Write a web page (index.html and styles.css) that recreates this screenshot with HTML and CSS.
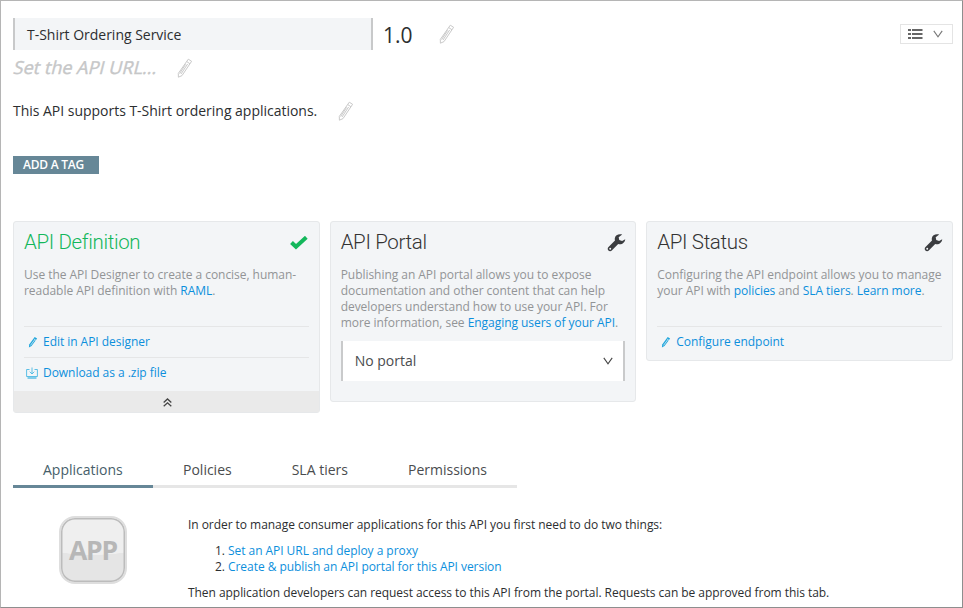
FILE: index.html
```html
<!DOCTYPE html>
<html lang="en">
<head>
<meta charset="utf-8">
<title>T-Shirt Ordering Service</title>
<link rel="stylesheet" href="styles.css">
</head>
<body>
<svg class="defs" width="0" height="0" aria-hidden="true">
  <symbol id="pencil" viewBox="0 0 16 20">
    <g fill="none" stroke="currentColor" stroke-linejoin="round" stroke-width="1">
      <path d="M11.3 1.2 14.6 3.3 5 17.6 1.4 19.2 1.3 15.4Z"/>
      <path d="M9.8 3.6 13 5.8M10.6 6 4 16M8.6 6.4 2.6 15.6"/>
    </g>
  </symbol>
  <symbol id="wrench" viewBox="0 0 20 20">
    <path fill="currentColor" fill-rule="evenodd" d="M16 1.1C12.5-.1 8.700 1.600 8.200 5c-.1.900 0 1.700.2 2.400L1.600 14.200c-1.100 1.100-1.100 2.700-.1 3.700s2.700.9 3.800-.2l6.500-6.600c3.500 1.100 7.200-1.300 7.400-5l-3.300 1.800-3-1-.6-3Zm-12.600 14a1 1 0 1 1 0 2 1 1 0 0 1 0-2Z"/>
  </symbol>
  <symbol id="edit" viewBox="0 0 10 12">
    <path d="M6.700.9 9.100 2.500 3.500 10 .9 11.400 1.200 8.400Z" fill="currentColor"/>
    <path d="M6 3 8 4.400M2.500 9.400 6.500 4" stroke="#f3f5f7" stroke-width=".7"/>
  </symbol>
</svg>
<main class="page">
  <header class="top">
    <div class="name">T-Shirt Ordering Service</div>
    <span class="version">1.0</span>
    <svg class="pencil"><use href="#pencil"/></svg>
    <div class="view">
      <svg width="15" height="12" viewBox="0 0 15 12" fill="#666"><path d="M0 1h3v2H0zM4 1h10.500v2H4zM0 5h3v2H0zM4 5h10.500v2H4zM0 9h3v2H0zM4 9h10.500v2H4z"/></svg>
      <svg width="10" height="8" viewBox="0 0 10 8" fill="none" stroke="#777" stroke-width="1.100"><path d="M.8.900 5 6.800 9.200.9"/></svg>
    </div>
  </header>
  <div class="url"><span class="slanted">Set the API URL...</span><svg class="pencil"><use href="#pencil"/></svg></div>
  <div class="desc"><span>This API supports T-Shirt ordering applications.</span><svg class="pencil"><use href="#pencil"/></svg></div>
  <div class="tag">ADD A TAG</div>

  <section class="cards">
    <article class="card">
      <div class="head done"><h2>API Definition</h2>
        <svg width="18" height="14" viewBox="0 0 18 14"><path d="M1.500 6.500 6 10.800 16.300 1.300" fill="none" stroke="#13b75b" stroke-width="4"/></svg>
      </div>
      <p>Use the API Designer to create a concise, human-<br>readable API definition with <a>RAML</a>.</p>
      <div class="action"><svg class="edit"><use href="#edit"/></svg><a>Edit in API designer</a></div>
      <div class="action"><svg class="down" viewBox="0 0 12 12" fill="none" stroke="#35b1e0"><path d="M3.500 2.500H.6v7h10.800v-7H8.500M6 .5v6M3.700 4.700 6 7l2.300-2.300" stroke-width=".8"/><path d="M1.500 11h9" stroke-width="1.200"/></svg><a>Download as a .zip file</a></div>
      <div class="collapse"><svg width="9" height="9" viewBox="0 0 9 9" fill="none" stroke="#444" stroke-width="1.300"><path d="M.7 4.500 4.500 1l3.800 3.500M.7 8.300 4.500 4.800l3.800 3.500"/></svg></div>
    </article>
    <article class="card portal">
      <div class="head"><h2>API Portal</h2><svg class="wrench"><use href="#wrench"/></svg></div>
      <p>Publishing an API portal allows you to expose<br>documentation and other content that can help<br>developers understand how to use your API. For<br>more information, see <a>Engaging users of your API</a>.</p>
      <div class="select"><span>No portal</span><svg width="10" height="8" viewBox="0 0 10 8" fill="none" stroke="#444" stroke-width="1.100"><path d="M.8.900 5 6.800 9.200.9"/></svg></div>
    </article>
    <article class="card status">
      <div class="head"><h2>API Status</h2><svg class="wrench"><use href="#wrench"/></svg></div>
      <p>Configuring the API endpoint allows you to manage<br>your API with <a>policies</a> and <a>SLA tiers</a>. <a>Learn more</a>.</p>
      <div class="action"><svg class="edit"><use href="#edit"/></svg><a>Configure endpoint</a></div>
    </article>
  </section>

  <nav class="tabs">
    <span class="tab active">Applications</span><span class="tab">Policies</span><span class="tab">SLA tiers</span><span class="tab">Permissions</span>
  </nav>
  <section class="panel">
    <div class="app"><span>APP</span></div>
    <div class="info">
      <p>In order to manage consumer applications for this API you first need to do two things:</p>
      <ol><li><a>Set an API URL and deploy a proxy</a></li><li><a>Create &amp; publish an API portal for this API version</a></li></ol>
      <p>Then application developers can request access to this API from the portal. Requests can be approved from this tab.</p>
    </div>
  </section>
</main>
</body>
</html>
```
FILE: styles.css
```css
* { box-sizing: border-box; }
body { margin: 0; font-family: "Open Sans", sans-serif; color: #2c2e30; background: #fff; }
svg { flex: none; display: block; }
.defs { position: absolute; }
.page { width: 963px; height: 608px; overflow: hidden; padding: 17px 9px 0 12px; border: 1px solid #b5b5b5; border-right-color: #8e8e8e; border-bottom-color: #8e8e8e; }
a { color: #0c8fdc; }
h2, p, ol { margin: 0; }

.top { display: flex; align-items: center; height: 32px; }
.name { width: 360px; height: 32px; padding-left: 12px; line-height: 33px; font-size: 14px; letter-spacing: -.02px; background: #f3f5f7; border: solid #c8c9ca; border-width: 0 2px; }
.version { width: 56px; margin-left: 10px; font-size: 21px; line-height: 32px; padding-top: 2px; }
.pencil { width: 16px; height: 20px; color: #c9c9c9; }
.view { display: flex; align-items: center; gap: 10px; width: 53px; height: 20px; margin-left: auto; padding-left: 7px; border: 1px solid #e4e4e4; }
.url { display: flex; align-items: center; gap: 20px; height: 35px; font-size: 18px; color: #c6c7c8; -webkit-text-stroke: .4px #c6c7c8; }
.slanted { width: 143px; height: 26px; margin-left: 1px; line-height: 24px; white-space: nowrap; letter-spacing: .03px; transform: skewX(-14deg); }
.desc { display: flex; align-items: center; gap: 21px; height: 20px; margin-top: 16px; font-size: 14px; letter-spacing: -.02px; }
.desc span { height: 21px; line-height: 19px; }
.tag { width: 86px; height: 18px; margin-top: 35px; padding-left: 10px; font-size: 12px; line-height: 18px; letter-spacing: -.25px; font-weight: 600; color: #fff; background: #668797; }

.cards { display: grid; grid-template-columns: repeat(3, minmax(0, 1fr)); gap: 10px; height: 192px; margin-top: 47px; align-items: start; }
.card { height: 192px; padding: 10px 10px 0; background: #f3f5f7; border: 1px solid #e6e8ea; border-radius: 3px; }
.portal { height: 181px; }
.status { height: 140px; }
.head { display: flex; align-items: center; justify-content: space-between; height: 22px; padding-right: 1px; }
.head h2 { font-family: Roboto, sans-serif; font-size: 20.5px; font-weight: 300; height: 22px; line-height: 20px; letter-spacing: -.35px; color: #333; }
.done h2 { color: #13b75b; }
.wrench { width: 19px; height: 20px; color: #3b3d40; margin-right: -2px; }
.card p { height: 59px; margin-top: 13px; font-size: 12px; line-height: 16px; letter-spacing: -.04px; color: #929496; white-space: nowrap; }
.portal p { height: 64px; }
.action { display: flex; align-items: center; height: 31px; padding-left: 2px; font-size: 12px; letter-spacing: -.04px; border-top: 1px solid #e5e6e7; }
.action a { height: 18px; line-height: 18px; }
.edit { width: 10px; height: 12px; margin: 0 5px 0 2px; color: #20a6dc; }
.down { width: 12px; height: 12px; margin-right: 5px; }
.collapse { display: flex; align-items: center; justify-content: center; height: 21px; margin: 3px -10px 0; padding: 1px 0 0 2px; background: #eaeaea; }
.select { display: flex; align-items: center; justify-content: space-between; height: 40px; margin-top: 10px; padding: 0 10px 0 12px; font-size: 14px; color: #4a4c4e; background: #fff; border: solid #c9cacb; border-width: 0 2px; }
.select span { height: 22px; line-height: 22px; }

.tabs { display: flex; width: 504px; height: 35px; margin-top: 40px; border-bottom: 3px solid #e6e6e6; }
.tab { height: 35px; padding: 0 30px; font-size: 14px; line-height: 34px; color: #4a4c4e; white-space: nowrap; }
.active { width: 140px; border-bottom: 3px solid #668797; color: #465e6a; }
.panel { display: flex; padding-left: 46px; margin-top: 28px; }
.app { display: flex; align-items: center; justify-content: center; width: 68px; height: 68px; border: 2px solid #dedede; border-radius: 16px; box-shadow: inset 0 0 0 1.5px #bcbcbc; background: radial-gradient(ellipse 50px 10px at 50% 27px, #efefef 96%, transparent 100%), linear-gradient(#efefef 43%, #e5e5e5 44%); font-size: 26.5px; font-weight: 700; letter-spacing: -1.2px; color: #b7b7b7; }
.info { margin-left: 61px; font-size: 12px; line-height: 16px; letter-spacing: -.05px; white-space: nowrap; padding-top: 1px; }
.info ol { margin: 10px 0; padding-left: 40px; }
```
